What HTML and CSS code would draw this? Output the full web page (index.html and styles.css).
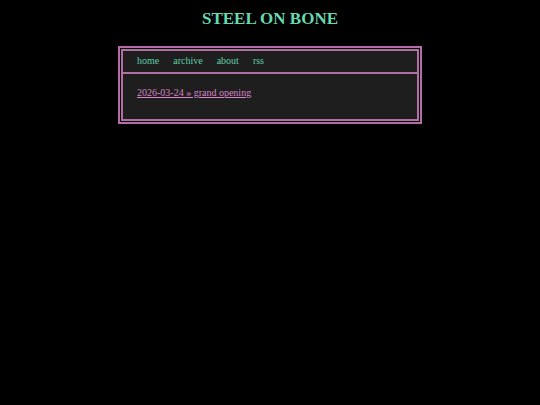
FILE: index.html
```html
<!DOCTYPE html>
<html lang="en">
<head>
  <meta charset="UTF-8" />
  <meta name="viewport" content="width=device-width, initial-scale=1" />
  <title>STEEL ON BONE</title>
  <link rel="stylesheet" href="styles.css">
</head>
<body>
  <header>
    <h1>STEEL ON BONE</h1>
  </header>
  <div class="container">
    <nav class="menu">
      <a href="/">home</a>
      <a href="/archive">archive</a>
      <a href="/about">about</a>
      <a href="/rss.xml">rss</a>
    </nav>
    <main class="content">
      <a href="/posts/grand-opening">2026-03-24 » grand opening</a>
    </main>
  </div>
</body>
</html>
```

FILE: styles.css
```css
body {
  margin: 0;
  background: #000;
  color: #66d9b0;
  font-family: Georgia, "Liberation Serif", serif;
  font-size: 10px;
  line-height: 16px;
}

h1 {
  margin: 0;
  padding: 10px 0 18px;
  font-size: 17px;
  line-height: 18px;
  text-align: center;
}

.container {
  box-sizing: border-box;
  width: 90%;
  max-width: 304px;
  margin: 0 auto;
  border: 5px double #b26ca6;
  background: #1e1e1e;
  background-clip: padding-box;
}

.menu {
  display: flex;
  gap: 14px;
  padding: 2px 14px 3px;
  border-bottom: 2px solid #b26ca6;
}

.menu a {
  color: #5fcea6;
  text-decoration: none;
}

.content {
  padding: 11px 14px 18px;
}

.content a {
  color: #d685c6;
}
```
